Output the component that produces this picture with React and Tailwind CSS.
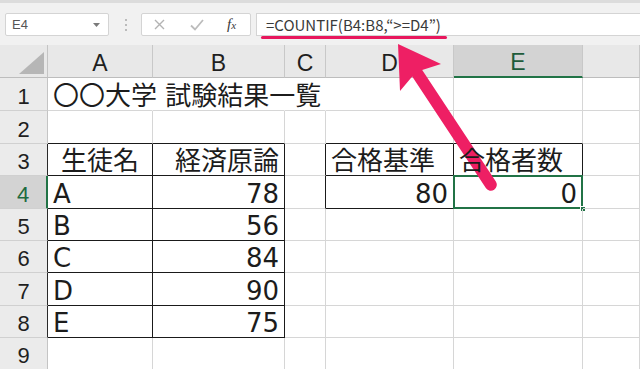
const COLS = [
  { id: 'A', w: 'w-[105px]' },
  { id: 'B', w: 'w-[132px]' },
  { id: 'C', w: 'w-[41px]' },
  { id: 'D', w: 'w-[128px]' },
  { id: 'E', w: 'w-[129px]' },
  { id: 'F', w: 'flex-1' },
];

const ROWS = [
  { n: 1, h: 'h-[33px]' },
  { n: 2, h: 'h-[33px]' },
  { n: 3, h: 'h-[32px]' },
  { n: 4, h: 'h-[33px]' },
  { n: 5, h: 'h-[32px]' },
  { n: 6, h: 'h-[32px]' },
  { n: 7, h: 'h-[33px]' },
  { n: 8, h: 'h-[32px]' },
  { n: 9, h: 'h-[32px]' },
];

// cell contents
const CELLS = {
  A1: { text: '〇〇大学 試験結果一覧', align: 'justify-start' },
  A3: { text: '生徒名', align: 'justify-center' },
  B3: { text: '経済原論', align: 'justify-end' },
  D3: { text: '合格基準', align: 'justify-start' },
  E3: { text: '合格者数', align: 'justify-start' },
  A4: { text: 'A', align: 'justify-start' },
  B4: { text: '78', align: 'justify-end' },
  A5: { text: 'B', align: 'justify-start' },
  B5: { text: '56', align: 'justify-end' },
  A6: { text: 'C', align: 'justify-start' },
  B6: { text: '84', align: 'justify-end' },
  A7: { text: 'D', align: 'justify-start' },
  B7: { text: '90', align: 'justify-end' },
  A8: { text: 'E', align: 'justify-start' },
  B8: { text: '75', align: 'justify-end' },
  D4: { text: '80', align: 'justify-end' },
  E4: { text: '0', align: 'justify-end' },
};

const BLACK_R = new Set([
  'A3', 'A4', 'A5', 'A6', 'A7', 'A8',
  'B3', 'B4', 'B5', 'B6', 'B7', 'B8',
  'C3', 'C4', 'D3', 'D4', 'E3', 'E4',
]);
const BLACK_B = new Set([
  'A2', 'B2', 'A3', 'A4', 'A5', 'A6', 'A7', 'A8',
  'B3', 'B4', 'B5', 'B6', 'B7', 'B8',
  'D2', 'E2', 'D3', 'E3', 'D4', 'E4',
]);
const NO_R = new Set(['A1', 'B1', 'C1']);

function Cell({ col, row }) {
  const key = col.id + row.n;
  const data = CELLS[key];
  const right = NO_R.has(key) ? 'border-r-transparent' : BLACK_R.has(key) ? 'border-r-[#1a1a1a]' : 'border-r-[#d6d6d6]';
  const bottom = BLACK_B.has(key) ? 'border-b-[#1a1a1a]' : 'border-b-[#d6d6d6]';
  const selected = key === 'E4';

  return (
    <div className={`${col.w} relative flex shrink-0 items-end border-r border-b px-[5px] pb-[1px] ${right} ${bottom} ${data ? data.align : ''}`}>
      {data && (
        <span className="relative z-10 whitespace-nowrap font-['DejaVu_Sans','Noto_Sans_CJK_JP',sans-serif] text-[26px] leading-none text-[#1c1c1c]">
          {data.text}
        </span>
      )}
      {selected && (
        <>
          <div className="absolute -top-[1px] -left-[1px] -right-[1px] -bottom-[1px] border-2 border-[#217346]"></div>
          <div className="absolute -right-[4px] -bottom-[4px] h-[6px] w-[6px] border border-white bg-[#217346]"></div>
        </>
      )}
    </div>
  );
}

export default function App() {
  return (
    <div className="relative h-[369px] w-[640px] overflow-hidden bg-white font-['Liberation_Sans',sans-serif]">
      {/* Toolbar / formula bar */}
      <div className="h-[45px] bg-[#f1f1f1]">
        <div className="h-[3px] bg-[#dcdcdc]"></div>
        <div className="flex items-start pt-[10px]">
          <div className="ml-[5px] flex h-[23px] w-[104px] items-center justify-between rounded-[2px] border border-[#d4d4d4] bg-white pl-[6px] pr-[8px]">
            <span className="text-[13px] text-[#555]">E4</span>
            <svg width="7" height="4" viewBox="0 0 7 4">
              <path d="M0 0 L7 0 L3.5 4 Z" fill="#7a7a7a" />
            </svg>
          </div>
          <div className="ml-[15px] flex h-[23px] w-[3px] flex-col items-center justify-center gap-[3px]">
            <div className="h-[2px] w-[2px] rounded-full bg-[#a8a8a8]"></div>
            <div className="h-[2px] w-[2px] rounded-full bg-[#a8a8a8]"></div>
            <div className="h-[2px] w-[2px] rounded-full bg-[#a8a8a8]"></div>
          </div>
          <div className="ml-[14px] flex h-[23px] w-[110px] items-center rounded-[2px] border border-[#d4d4d4] bg-white pl-[12px]">
            <svg width="11" height="11" viewBox="0 0 11 11">
              <path d="M1 1 L10 10 M10 1 L1 10" stroke="#b3b3b3" strokeWidth="1.4" fill="none" />
            </svg>
            <svg className="ml-[25px]" width="14" height="12" viewBox="0 0 14 12">
              <path d="M1 6.5 L5 10.5 L13 1" stroke="#bcbcbc" strokeWidth="1.8" fill="none" />
            </svg>
            <span className="ml-[23px] font-['Liberation_Serif',serif] text-[15px] italic leading-none text-[#3a3a3a]">
              f<span className="text-[11px]">x</span>
            </span>
          </div>
          <div className="ml-[5px] flex h-[23px] flex-1 items-center border border-r-0 border-[#d4d4d4] bg-white pl-[9px]">
            <span className="whitespace-nowrap font-['Noto_Sans_CJK_JP',sans-serif] text-[15px] leading-none text-[#3a3a3a]">
              =COUNTIF(B4:B8,“&gt;=D4”)
            </span>
          </div>
        </div>
      </div>

      {/* Column headers */}
      <div className="flex h-[33px] bg-[#e8e8e8]">
        <div className="relative w-[48px] shrink-0 border-r border-b border-r-[#c4c4c4] border-b-[#bdbdbd]">
          <svg className="absolute left-[19px] top-[7px]" width="25" height="22" viewBox="0 0 25 22">
            <path d="M25 0 L25 22 L0 22 Z" fill="#b6b6b6" />
          </svg>
        </div>
        {COLS.map((col) => {
          const active = col.id === 'E';
          return (
            <div
              key={col.id}
              className={`${col.w} flex shrink-0 items-end justify-center border-r border-r-[#c8c8c8] pb-[2px] text-[23px] leading-none ${
                active ? 'border-b-2 border-b-[#217346] bg-[#d3d3d3] text-[#1e5b3a]' : 'border-b border-b-[#bdbdbd] text-[#1f1f1f]'
              }`}
            >
              {col.id !== 'F' && col.id}
            </div>
          );
        })}
      </div>

      {/* Rows */}
      {ROWS.map((row) => {
        const active = row.n === 4;
        const framed = row.n >= 3 && row.n <= 8;
        return (
          <div key={row.n} className={`flex ${row.h}`}>
            <div
              className={`flex w-[48px] shrink-0 items-end justify-center border-b border-b-[#d0d0d0] pb-[2px] text-[22px] leading-none ${
                active
                  ? 'border-r-2 border-r-[#217346] bg-[#d3d3d3] text-[#1e6b40]'
                  : framed
                  ? 'border-r border-r-[#2a2a2a] bg-[#ebebeb] text-[#1f1f1f]'
                  : 'border-r border-r-[#c4c4c4] bg-[#ebebeb] text-[#1f1f1f]'
              }`}
            >
              {row.n}
            </div>
            {COLS.map((col) => (
              <Cell key={col.id} col={col} row={row} />
            ))}
          </div>
        );
      })}

      {/* Annotation: underline + arrow */}
      <div className="absolute left-[261px] top-[36px] h-[3px] w-[186px] rounded-full bg-[#e8175d]"></div>
      <svg className="pointer-events-none absolute left-0 top-0" width="640" height="369" viewBox="0 0 640 369">
        <path
          d="M398 44 L441 64 L422.2 69.9 L496 181.7 A6 6 0 0 1 486 188.3 L412.2 76.5 L400 91 Z"
          fill="#ee1f64"
        />
      </svg>
    </div>
  );
}
